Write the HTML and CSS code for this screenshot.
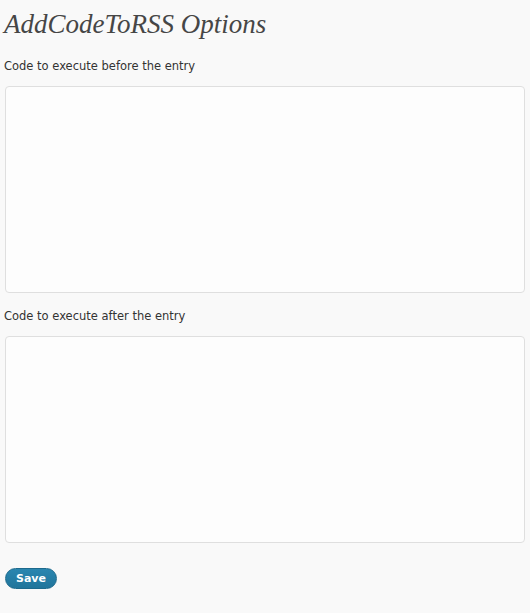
FILE: index.html
```html
<!DOCTYPE html>
<html>
<head>
<meta charset="utf-8">
<link rel="stylesheet" href="styles.css">
</head>
<body>
<div class="wrap">
  <h2 class="title">AddCodeToRSS Options</h2>
  <form class="form">
    <label class="label">Code to execute before the entry</label>
    <textarea class="code"></textarea>
    <label class="label second">Code to execute after the entry</label>
    <textarea class="code"></textarea>
    <div class="actions"><button type="button" class="save">Save</button></div>
  </form>
</div>
</body>
</html>
```
FILE: styles.css
```css
html, body {
  margin: 0;
  padding: 0;
  background: #f9f9f9;
}
.wrap {
  padding: 0 5px 0 4px;
}
.title {
  margin: 0;
  padding: 10px 0 0 0;
  font-family: "Liberation Serif", serif;
  font-style: italic;
  font-weight: normal;
  font-size: 27px;
  line-height: 28px;
  color: #464646;
}
.form {
  display: flex;
  flex-direction: column;
}
.label {
  font-family: "DejaVu Sans", sans-serif;
  font-size: 11.5px;
  line-height: 14px;
  color: #333;
  margin-top: 21px;
  margin-bottom: 13px;
}
.label.second { margin-top: 16px; }
.code {
  display: block;
  box-sizing: border-box;
  margin: 0 0 0 1px;
  height: 207px;
  border: 1px solid #dfdfdf;
  border-radius: 4px;
  background: #fdfdfd;
  resize: none;
}
.actions {
  margin-top: 25px;
}
.save {
  margin-left: 1px;
  width: 52px;
  height: 21px;
  padding: 0;
  border: 1px solid #1d6a8d;
  border-radius: 11px;
  background: linear-gradient(#2a86b0, #21759b);
  color: #fff;
  font-family: "DejaVu Sans", sans-serif;
  font-weight: bold;
  font-size: 11px;
}
```
